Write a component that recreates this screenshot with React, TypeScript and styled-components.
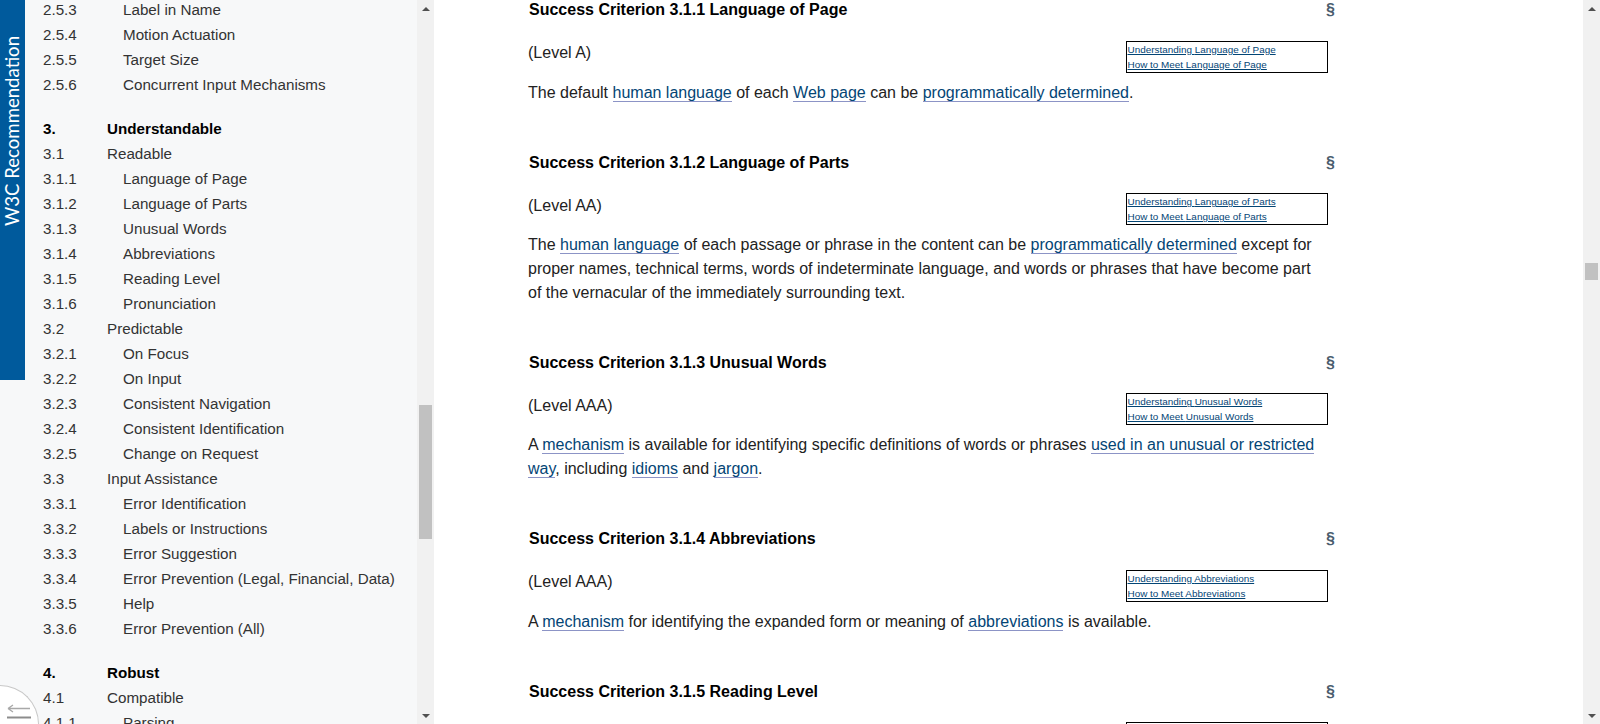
import React from "react";
import styled, { createGlobalStyle } from "styled-components";

const GlobalStyle = createGlobalStyle`
  html, body {
    margin: 0;
    padding: 0;
    height: 100%;
    overflow: hidden;
    background: #fff;
  }
`;

const Page = styled.div`
  position: relative;
  display: flex;
  width: 1600px;
  height: 724px;
  overflow: hidden;
  font-family: "Liberation Sans", Arial, sans-serif;
  color: #000;
`;

const Sidebar = styled.nav`
  display: flex;
  flex: none;
  width: 434px;
  height: 724px;
  background: #f7f8f9;
`;

const Badge = styled.div`
  flex: none;
  box-sizing: border-box;
  width: 25px;
  height: 380px;
  padding-top: 154px;
  background: #005a9c;
  color: #fff;
  font-family: Lato, sans-serif;
  font-size: 18.6px;
  line-height: 25px;
  white-space: nowrap;
  writing-mode: vertical-rl;
  transform: rotate(180deg);
`;

const TocList = styled.ol`
  flex: 1;
  min-width: 0;
  margin: -3.5px 0 0;
  padding: 0 0 0 18px;
  list-style: none;
  overflow: hidden;
`;

const TocRow = styled.li<{ $major?: boolean }>`
  display: flex;
  height: 25px;
  margin-top: ${(p) => (p.$major ? "19px" : "0")};
  font-size: 15.2px;
  line-height: 25px;
  font-weight: ${(p) => (p.$major ? "bold" : "normal")};
  color: ${(p) => (p.$major ? "#000" : "#333")};
  white-space: nowrap;
`;

const TocNum = styled.span<{ $deep: boolean }>`
  flex: none;
  width: ${(p) => (p.$deep ? "80px" : "64px")};
`;

const ScrollTrack = styled.div`
  display: flex;
  flex: none;
  flex-direction: column;
  align-items: center;
  width: 17px;
  height: 724px;
  background: #f1f1f1;
`;

const ScrollArrow = styled.div<{ $down?: boolean }>`
  width: 0;
  height: 0;
  margin: ${(p) => (p.$down ? "auto 0 6px" : "7px 0 0")};
  border-left: 4px solid transparent;
  border-right: 4px solid transparent;
  border-${(p) => (p.$down ? "top" : "bottom")}: 4px solid #505050;
`;

const ScrollThumb = styled.div<{ $top: number; $size: number }>`
  flex: none;
  width: 13px;
  height: ${(p) => p.$size}px;
  margin-top: ${(p) => p.$top - 11}px;
  background: #c1c1c1;
`;

const Content = styled.main`
  flex: 1;
  min-width: 0;
  height: 724px;
  padding-left: 95px;
  overflow: hidden;
`;

const Criterion = styled.section`
  width: 799px;
  padding-bottom: 48.3px;
`;

const HeadingRow = styled.div`
  display: flex;
  justify-content: space-between;
  margin-bottom: 21px;
`;

const Heading = styled.h4`
  margin: 0;
  font-size: 16px;
  line-height: 20px;
  font-weight: bold;
  color: #000;
`;

const SectionMark = styled.span`
  margin-right: -7px;
  font-size: 16px;
  line-height: 20px;
  font-weight: bold;
  color: #4a5c6e;
`;

const LevelRow = styled.div`
  display: flex;
  align-items: flex-start;
  justify-content: space-between;
  margin-bottom: 8px;
`;

const Level = styled.span`
  margin-left: -1px;
  font-size: 16px;
  line-height: 24px;
  color: #222;
`;

const LinkBox = styled.div`
  box-sizing: border-box;
  display: flex;
  flex-direction: column;
  width: 202px;
  height: 32px;
  margin-top: -0.5px;
  padding: 0 1px 0 0.5px;
  border: 1px solid #000;
`;

const BoxLink = styled.a`
  font-size: 9.92px;
  line-height: 15px;
  color: #034575;
  text-decoration: underline;
`;

const Body = styled.p`
  margin: 0 0 0 -1px;
  font-size: 16px;
  line-height: 23.8px;
  color: #222;
`;

const Term = styled.a`
  color: #034575;
  text-decoration: none;
  border-bottom: 1px solid #8c94c6;
`;

const BackButton = styled.div`
  position: absolute;
  left: 0;
  bottom: 0;
  width: 39px;
  height: 39px;
  box-sizing: border-box;
  background: #fff;
  border-top: 1px solid #c8c8c8;
  border-right: 1px solid #c8c8c8;
  border-top-right-radius: 100%;
`;

const BackIcon = styled.svg`
  position: absolute;
  left: 6px;
  top: 12px;
  display: block;
`;

const toc: [string, string][] = [
  ["2.5.3", "Label in Name"],
  ["2.5.4", "Motion Actuation"],
  ["2.5.5", "Target Size"],
  ["2.5.6", "Concurrent Input Mechanisms"],
  ["3.", "Understandable"],
  ["3.1", "Readable"],
  ["3.1.1", "Language of Page"],
  ["3.1.2", "Language of Parts"],
  ["3.1.3", "Unusual Words"],
  ["3.1.4", "Abbreviations"],
  ["3.1.5", "Reading Level"],
  ["3.1.6", "Pronunciation"],
  ["3.2", "Predictable"],
  ["3.2.1", "On Focus"],
  ["3.2.2", "On Input"],
  ["3.2.3", "Consistent Navigation"],
  ["3.2.4", "Consistent Identification"],
  ["3.2.5", "Change on Request"],
  ["3.3", "Input Assistance"],
  ["3.3.1", "Error Identification"],
  ["3.3.2", "Labels or Instructions"],
  ["3.3.3", "Error Suggestion"],
  ["3.3.4", "Error Prevention (Legal, Financial, Data)"],
  ["3.3.5", "Help"],
  ["3.3.6", "Error Prevention (All)"],
  ["4.", "Robust"],
  ["4.1", "Compatible"],
  ["4.1.1", "Parsing"],
];

const criteria = [
  {
    title: "Success Criterion 3.1.1 Language of Page",
    level: "(Level A)",
    name: "Language of Page",
    body: (
      <>
        The default <Term>human language</Term> of each <Term>Web page</Term> can be{" "}
        <Term>programmatically determined</Term>.
      </>
    ),
  },
  {
    title: "Success Criterion 3.1.2 Language of Parts",
    level: "(Level AA)",
    name: "Language of Parts",
    body: (
      <>
        The <Term>human language</Term> of each passage or phrase in the content can be{" "}
        <Term>programmatically determined</Term> except for proper names, technical terms, words of
        indeterminate language, and words or phrases that have become part of the vernacular of the
        immediately surrounding text.
      </>
    ),
  },
  {
    title: "Success Criterion 3.1.3 Unusual Words",
    level: "(Level AAA)",
    name: "Unusual Words",
    body: (
      <>
        A <Term>mechanism</Term> is available for identifying specific definitions of words or phrases{" "}
        <Term>used in an unusual or restricted way</Term>, including <Term>idioms</Term> and{" "}
        <Term>jargon</Term>.
      </>
    ),
  },
  {
    title: "Success Criterion 3.1.4 Abbreviations",
    level: "(Level AAA)",
    name: "Abbreviations",
    body: (
      <>
        A <Term>mechanism</Term> for identifying the expanded form or meaning of{" "}
        <Term>abbreviations</Term> is available.
      </>
    ),
  },
  {
    title: "Success Criterion 3.1.5 Reading Level",
    level: "(Level AAA)",
    name: "Reading Level",
    body: null,
  },
];

const App = () => {
  return (
    <Page>
      <GlobalStyle />
      <Sidebar>
        <Badge>W3C Recommendation</Badge>
        <TocList>
          {toc.map(([num, label]) => {
            const depth = num.replace(/\.$/, "").split(".").length;
            return (
              <TocRow key={num} $major={num.endsWith(".")}>
                <TocNum $deep={depth === 3}>{num}</TocNum>
                {label}
              </TocRow>
            );
          })}
        </TocList>
        <ScrollTrack>
          <ScrollArrow />
          <ScrollThumb $top={405} $size={134} />
          <ScrollArrow $down />
        </ScrollTrack>
      </Sidebar>
      <Content>
        {criteria.map((c) => (
          <Criterion key={c.title}>
            <HeadingRow>
              <Heading>{c.title}</Heading>
              <SectionMark>§</SectionMark>
            </HeadingRow>
            <LevelRow>
              <Level>{c.level}</Level>
              <LinkBox>
                <BoxLink>Understanding {c.name}</BoxLink>
                <BoxLink>How to Meet {c.name}</BoxLink>
              </LinkBox>
            </LevelRow>
            {c.body && <Body>{c.body}</Body>}
          </Criterion>
        ))}
      </Content>
      <ScrollTrack>
        <ScrollArrow />
        <ScrollThumb $top={263} $size={17} />
        <ScrollArrow $down />
      </ScrollTrack>
      <BackButton>
        <BackIcon width="26" height="26" viewBox="0 0 26 26" fill="none">
          <path d="M2 10.5H24M2 10.5L7 7M2 10.5L7 14" stroke="#a8a8a8" strokeWidth="1.3" />
          <path d="M1 19.5H25" stroke="#8c8c8c" strokeWidth="2" />
        </BackIcon>
      </BackButton>
    </Page>
  );
};

export default App;
